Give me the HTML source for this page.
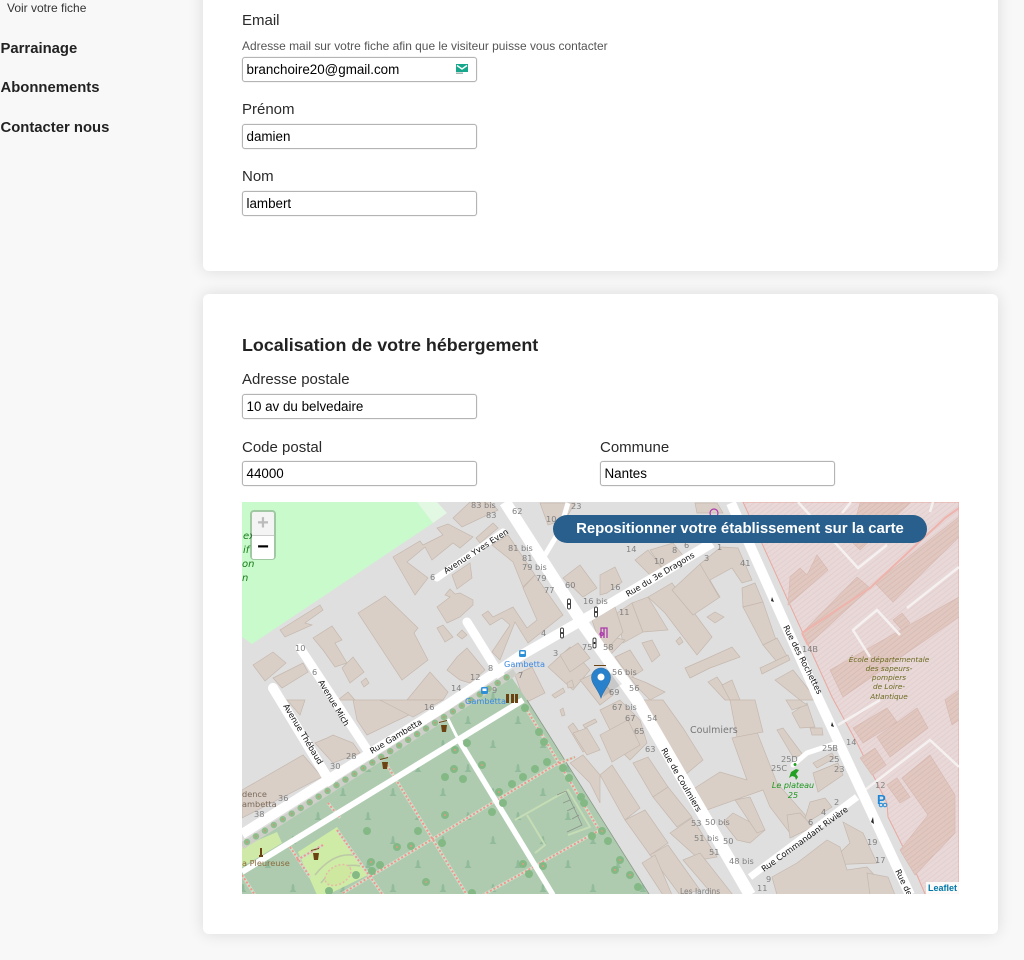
<!DOCTYPE html>
<html lang="fr"><head><meta charset="utf-8"><title>Localisation</title>
<style>
html,body{margin:0;padding:0;background:#f8f8f8}
body{width:1024px;height:960px;overflow:hidden;background:#f8f8f8;font-family:"Liberation Sans",Arial,sans-serif;color:#222;position:relative}
#w{position:absolute;left:0;top:0;width:1024px;height:960px;filter:blur(.35px);overflow:hidden}
.a{position:absolute;white-space:nowrap}
.nav{font-weight:bold;font-size:14.850px;left:.500px;color:#222;line-height:18px}
.card{position:absolute;left:203px;width:795px;background:#fff;border-radius:6px;box-shadow:0 0 16px rgba(0,0,0,.12)}
.lb{font-size:15px;left:242px;line-height:18px;color:#2a2a2a}
.in{position:absolute;box-sizing:border-box;width:235px;height:25px;border:1px solid #b4b4b4;border-radius:3px;background:#fff;font-size:13.400px;line-height:23px;padding-left:3.500px;color:#000;box-shadow:0 0 1px rgba(0,0,0,.25)}
svg text{font-family:"DejaVu Sans",sans-serif;font-size:8.200px;fill:#808080}
svg text.r{fill:#111;font-size:8.200px}
svg text.b{fill:#3b88e0;font-size:8.200px}
.z{position:absolute;left:250px;top:510px;width:26px;height:50px;box-sizing:border-box;border:2px solid rgba(0,0,0,.2);border-radius:4px;background-clip:padding-box}
.z div{height:23px;background:#fff;text-align:center;font:bold 20px/22px "Liberation Sans",sans-serif;color:#000}
.z div:first-child{background:#f4f4f4;color:#bbb;border-bottom:1px solid #ccc;border-radius:2px 2px 0 0}
.z div:last-child{border-radius:0 0 2px 2px}
</style></head><body><div id="w">
<div class="a" style="left:7px;top:1px;font-size:12px;line-height:14px;color:#333">Voir votre fiche</div>
<div class="a nav" style="top:40px">Parrainage</div>
<div class="a nav" style="top:79px">Abonnements</div>
<div class="a nav" style="top:119px">Contacter nous</div>

<div class="card" style="top:-20px;height:291px"></div>
<div class="card" style="top:294px;height:640px"></div>

<div class="a lb" style="top:12px">Email</div>
<div class="a" style="left:242px;top:38.500px;font-size:11.950px;line-height:14px;color:#555">Adresse mail sur votre fiche afin que le visiteur puisse vous contacter</div>
<div class="in" style="left:242px;top:57px">branchoire20@gmail.com
<svg style="position:absolute;left:213px;top:6px" width="12" height="11" viewBox="0 0 12 11"><rect x="0" y="0" width="12" height="8" fill="#16a78c"/><path d="M1 1.500 6 5 11 1.500" fill="none" stroke="#fff" stroke-width="1.400"/><rect x="0" y="8.500" width="7" height="1.500" fill="#9fb5b0"/></svg></div>
<div class="a lb" style="top:101px">Prénom</div>
<div class="in" style="left:242px;top:124px">damien</div>
<div class="a lb" style="top:168px">Nom</div>
<div class="in" style="left:242px;top:191px">lambert</div>

<div class="a" style="left:242px;top:334.500px;font-size:17.900px;font-weight:bold;line-height:21px;color:#222">Localisation de votre hébergement</div>
<div class="a lb" style="top:371px">Adresse postale</div>
<div class="in" style="left:242px;top:394px">10 av du belvedaire</div>
<div class="a lb" style="top:439px">Code postal</div>
<div class="in" style="left:242px;top:461px">44000</div>
<div class="a lb" style="left:600px;top:439px">Commune</div>
<div class="in" style="left:600px;top:461px">Nantes</div>

<svg class="a" style="left:242px;top:502px" width="717" height="392" viewBox="242 502 717 392">
<defs>
<pattern id="tr" width="50" height="48" patternUnits="userSpaceOnUse" x="10" y="-8">
<path d="M8 4c1.500 0 1.500 4 1.500 5.500l2 2.500h-7l2-2.500C6.500 8 6.500 4 8 4zM33 28c1.500 0 1.500 4 1.500 5.500l2 2.500h-7l2-2.500c0-1.500 0-5.500 1.500-5.500z" fill="#92bb9b"/>
</pattern>
<pattern id="h" width="4" height="4" patternUnits="userSpaceOnUse" patternTransform="rotate(-38)">
<rect width="4" height="4" fill="#e9d8d8"/><rect width="4" height="1" fill="#e4cfcf"/>
</pattern>
<pattern id="hb" width="4" height="4" patternUnits="userSpaceOnUse" patternTransform="rotate(-38)">
<rect width="4" height="4" fill="#e0c8c0"/><rect width="4" height="1" fill="#dabdb5"/>
</pattern>
</defs>
<rect x="242" y="502" width="717" height="392" fill="#dfdfdf"/>
<polygon points="242,502 417,502 433,523 252,644 242,637" fill="#c8facc"/>
<polygon points="417,502 437,502 447,513 433,523" fill="#e2f8e2"/>
<text x="243" y="539" style="fill:#1c7a1c;font-style:italic;font-size:10px">ex</text>
<text x="243" y="553" style="fill:#1c7a1c;font-style:italic;font-size:10px">if</text>
<text x="242" y="567" style="fill:#1c7a1c;font-style:italic;font-size:10px">on</text>
<text x="242" y="581" style="fill:#1c7a1c;font-style:italic;font-size:10px">n</text>

<!-- pink -->
<polygon points="743,502 832,697 857,743 887,803 888,817 917,875 925,894 959,894 959,502" fill="url(#h)" stroke="#e8a8a0" stroke-width="1"/>
<g fill="url(#hb)" stroke="#d6b8b0" stroke-width=".6">
<polygon points="790,577 800,568 807,575 817,555 828,570 788,605"/>
<polygon points="802,633 857,577 870,588 808,645"/>
<polygon points="875,583 959,517 959,537 893,602"/>
<polygon points="830,670 959,597 959,617 843,697"/>
<polygon points="860,503 910,503 860,550 850,540"/>
<polygon points="893,620 902,613 910,623 902,630"/>
<polygon points="853,728 887,708 897,722 863,743"/>
<polygon points="877,737 917,708 928,728 890,757"/>
<polygon points="860,758 875,748 886,765 872,775"/>
<polygon points="887,785 897,778 910,797 900,803"/>
<polygon points="902,778 930,755 955,795 955,833 915,875 900,850 928,815"/>
<polygon points="945,700 959,690 959,720 952,725"/>
</g>
<path d="M802 633 870 588 945 518 959 508M808 645 802 633" fill="none" stroke="#eeb3ab" stroke-width="2"/>
<g fill="none" stroke="#f6f1f1" stroke-width="2.500">
<path d="M798 502 858 568 887 545M842 513 851 502M930 512 933 502M907 608 959 567M900 635 877 610 853 630 870 657M865 790 930 740 959 767M838 725 880 700"/>
</g>

<!-- buildings -->
<g fill="#d9cfc7" stroke="#c5b8ad" stroke-width=".7">
<polygon points="280,630 320,605 323,610 305,623 312,625 285,637"/>
<polygon points="313,638 332,626 342,640 335,643 347,663 335,667 323,650"/>
<polygon points="342,668 353,657 364,672 350,683"/>
<polygon points="253,665 273,652 286,663 265,681"/>
<polygon points="273,678 303,663 308,672 282,688"/>
<polygon points="361,682 366,678 369,683 364,687"/>
<polygon points="358,613 385,596 418,628 414,633 428,660 402,680"/>
<polygon points="393,557 420,541 423,545 443,535 437,528 448,524 473,537 460,548 453,543 432,560 425,547 407,562 428,578 415,595"/>
<polygon points="453,518 470,502 490,502 498,510 462,527"/>
<polygon points="476,538 493,523 498,528 480,543"/>
<polygon points="492,545 508,535 535,575 523,587 513,562"/>
<polygon points="452,575 470,563 472,578 457,589"/>
<polygon points="437,607 450,597 445,595 450,589 455,594 460,593 473,600 473,605 460,617 447,623"/>
<polygon points="437,628 443,625 453,637 445,642"/>
<polygon points="457,635 462,630 467,635 462,639"/>
<polygon points="482,615 488,611 493,617 513,607 527,628 537,620 523,588 535,575 563,615 528,643 515,622 500,660 492,652 510,625 502,618 490,625"/>
<polygon points="447,670 457,657 467,648 485,670 470,683 460,680"/>
<polygon points="407,700 430,672 448,692 443,700"/>
<polygon points="338,700 348,692 355,700"/>
<polygon points="515,675 532,667 545,693 525,703"/>
<polygon points="548,667 570,647 590,670 573,690"/>
<polygon points="563,578 580,565 597,588 583,597"/>
<polygon points="567,683 572,680 574,687 568,688"/>
<polygon points="552,695 563,688 565,692 555,698"/>
<polygon points="600,575 615,567 622,582 607,593 600,595"/>
<polygon points="635,560 648,550 665,572 653,578"/>
<polygon points="650,550 673,543 685,558 665,572"/>
<polygon points="695,503 717,503 723,513 697,513"/>
<polygon points="540,503 575,503 565,520 548,525"/>
<polygon points="617,613 632,603 643,632 623,643"/>
<polygon points="632,603 648,597 668,630 643,632"/>
<polygon points="648,597 672,583 712,637 697,655 665,613"/>
<polygon points="672,590 700,564 720,597 693,615"/>
<polygon points="721,547 738,548 752,580 742,583 732,568 710,580 719,597 700,564"/>
<polygon points="642,643 652,640 660,655 652,662"/>
<polygon points="600,643 613,637 625,640 610,655"/>
<polygon points="615,657 630,650 643,670 632,677 647,683 665,692 650,700 637,687"/>
<polygon points="707,617 715,612 724,617 715,623"/>
<polygon points="676,641 680,637 683,642 679,645"/>
<polygon points="742,588 755,583 763,602 743,607"/>
<polygon points="743,607 763,602 777,643 763,645"/>
<polygon points="763,645 777,638 788,658 777,662"/>
<polygon points="760,668 788,655 790,660 762,674"/>
<polygon points="685,668 708,658 732,647 740,657 710,668 690,678"/>
<polygon points="775,680 793,670 817,700 800,700"/>
<polygon points="708,682 717,677 733,700 725,700"/>
<polygon points="722,685 732,680 740,700 730,700"/>
<polygon points="643,700 663,700 683,728 703,760 685,775 663,743"/>
<polygon points="600,710 620,700 640,720 647,743 630,760 620,750"/>
<polygon points="600,735 628,720 640,745 612,762"/>
<polygon points="600,775 612,765 640,808 625,820"/>
<polygon points="625,820 645,810 668,843 650,855"/>
<polygon points="650,855 668,845 700,890 680,895"/>
<polygon points="633,763 648,757 668,787 653,797"/>
<polygon points="653,797 668,787 692,817 677,827"/>
<polygon points="670,833 692,818 717,857 700,860"/>
<polygon points="683,860 700,853 733,895 713,895"/>
<polygon points="642,863 655,855 672,895 663,895"/>
<polygon points="732,738 757,732 777,783 807,817 793,837 770,807 763,790 707,810 695,788 720,772 747,780"/>
<polygon points="730,700 755,700 763,732 737,737"/>
<polygon points="777,730 783,728 803,755 793,757"/>
<polygon points="813,763 832,753 835,758 817,768"/>
<polygon points="813,773 838,763 843,775 818,792"/>
<polygon points="810,802 825,798 832,807 803,825"/>
<polygon points="787,815 800,813 813,827 790,838"/>
<polygon points="723,822 733,813 765,830 750,843 737,840"/>
<polygon points="735,800 750,797 765,830 757,833"/>
<polygon points="843,822 863,833 877,863 827,865 850,843"/>
<polygon points="772,877 797,863 827,840 840,847 847,870 867,867 893,895 777,895"/>
<polygon points="867,873 888,877 895,895 870,895"/>
<polygon points="792,713 807,703 815,727 800,728"/>
<polygon points="810,728 822,728 823,735 812,735"/>
<polygon points="786,700 800,700 807,705 792,710"/>
<polygon points="568,727 573,723 590,747 583,752"/>
<polygon points="560,710 563,708 565,715 562,716"/>
<polygon points="583,725 595,719 597,722 585,728"/>
<polygon points="570,763 583,755 600,775 600,803 590,783"/>
<polygon points="573,733 587,728 600,750 587,755"/>
<polygon points="580,680 597,672 613,695 600,705"/>
<polygon points="560,655 578,643 590,658 570,672"/>
<polygon points="592,620 615,607 623,632 603,653"/>
<polygon points="242,790 303,755 322,777 242,818"/>
<polygon points="315,743 327,738 333,735 353,743 360,753 333,763"/>
<polygon points="353,700 380,700 413,713 367,735 357,720"/>
<polygon points="380,700 443,700 413,717"/>
<polygon points="287,700 305,700 300,715"/>
</g>

<!-- park -->
<polygon points="242,848 512,678 527,700 649,894 242,894" fill="#aecbb0"/>
<polygon points="242,848 512,678 527,700 649,894 242,894" fill="url(#tr)"/>
<path d="M527 700 649 894" stroke="#8a9a88" stroke-width=".8" fill="none"/>
<polygon points="242,847 277,832 282,843 242,867" fill="#cfeaa8"/>
<polygon points="298,852 337,827 368,875 327,895 317,895" fill="#cfeca6"/>
<g fill="none" stroke="#bcc9a6" stroke-width="1.600">
<path d="M315 875Q335 850 358 856M321 883Q337 862 360 866"/>
</g>
<ellipse cx="338" cy="875" rx="14" ry="9" fill="#cfe8a0" stroke="#e5b8a8" stroke-width="1.500" stroke-dasharray="2 2" transform="rotate(-30 338 875)"/>
<path d="M515 820 568 790 590 827 568 835M527 815 545 845 535 853" fill="none" stroke="#c5dcb5" stroke-width="2"/>
<path d="M557 795 566 791 582 825 567 832M563 803 570 800M567 811 575 807M572 819 579 815" fill="none" stroke="#8c9488" stroke-width=".8"/>

<!-- pink paths -->
<g fill="none" stroke="#cfdfca" stroke-width="3"><path d="M387 765 467 895M290 847 310 877M328 803 340 818M343 893 555 765 575 757M483 895 600 830M527 710 598 828M297 860 323 845M242 875 255 895M337 830 383 895"/></g>
<g fill="none" stroke="#f0968c" stroke-width="2" stroke-dasharray="2 2"><path d="M387 765 467 895M290 847 310 877M328 803 340 818M343 893 555 765 575 757M483 895 600 830M527 710 598 828M297 860 323 845M242 875 255 895M337 830 383 895"/></g>

<!-- white roads -->
<g fill="none" stroke="#fff" stroke-linecap="butt">
<path d="M505 502 585 627 637 700 750 895" stroke-width="12"/>
<path d="M731 503 819 700 910 895" stroke-width="10"/>
<path d="M242 834 447 705 520 656 600 610 712 543" stroke-width="10"/>
<path d="M242 872 523 700" stroke-width="6"/>
<path d="M447 717 457 737" stroke-width="3"/>
<path d="M457 737 553 895" stroke-width="5.500"/>
<path d="M437 578 503 532" stroke-width="7" stroke-linecap="round"/>
<path d="M467 622 500 675" stroke-width="9" stroke-linecap="round"/>
<path d="M300 648 372 757" stroke-width="9" stroke-linecap="round"/>
<path d="M273 688 330 782" stroke-width="10" stroke-linecap="round"/>
<path d="M750 877 857 797" stroke-width="7"/>
<path d="M793 765 807 753 837 743" stroke-width="5" stroke-linecap="round"/>
<path d="M568 503 560 530 545 555" stroke-width="5"/>
</g>
<!-- tree row -->
<path d="M242 846 515 672" stroke="#cfcfc9" stroke-width="7" fill="none"/>
<path d="M247 842 512 674" stroke="#90bf8e" stroke-width="6.500" stroke-linecap="round" stroke-dasharray="0 10.600" fill="none"/>
<path d="M247 842 512 674" stroke="#c09b7c" stroke-width="2" stroke-linecap="round" stroke-dasharray="0 10.600" fill="none"/>
<!-- trees -->
<g fill="#84b986">
<circle cx="455" cy="750" r="4"/><circle cx="467" cy="743" r="4"/><circle cx="482" cy="765" r="4"/><circle cx="445" cy="777" r="4"/><circle cx="454" cy="769" r="4"/><circle cx="463" cy="779" r="4"/><circle cx="499" cy="792" r="4"/><circle cx="512" cy="784" r="4"/><circle cx="523" cy="777" r="4"/><circle cx="535" cy="769" r="4"/><circle cx="547" cy="762" r="4"/><circle cx="525" cy="708" r="4"/><circle cx="539" cy="732" r="4"/><circle cx="544" cy="742" r="4"/><circle cx="563" cy="768" r="4"/><circle cx="569" cy="778" r="4"/><circle cx="581" cy="797" r="4"/><circle cx="584" cy="803" r="4"/><circle cx="592" cy="836" r="4"/><circle cx="503" cy="803" r="4"/><circle cx="492" cy="812" r="4"/><circle cx="445" cy="815" r="4"/><circle cx="418" cy="831" r="4"/><circle cx="367" cy="831" r="4"/><circle cx="397" cy="847" r="4"/><circle cx="411" cy="846" r="4"/><circle cx="442" cy="843" r="4"/><circle cx="371" cy="862" r="4"/><circle cx="380" cy="865" r="4"/><circle cx="372" cy="871" r="4"/><circle cx="356" cy="875" r="4"/><circle cx="426" cy="882" r="4"/><circle cx="523" cy="864" r="4"/><circle cx="543" cy="866" r="4"/><circle cx="529" cy="874" r="4"/><circle cx="472" cy="893" r="4"/><circle cx="329" cy="891" r="4"/><circle cx="602" cy="831" r="4"/><circle cx="608" cy="841" r="4"/><circle cx="620" cy="860" r="4"/><circle cx="615" cy="870" r="4"/><circle cx="630" cy="875" r="4"/><circle cx="638" cy="887" r="4"/>
</g>
<g fill="#e09a80"><circle cx="455" cy="750" r="1"/><circle cx="482" cy="765" r="1"/><circle cx="454" cy="769" r="1"/><circle cx="499" cy="792" r="1"/><circle cx="445" cy="815" r="1"/><circle cx="397" cy="847" r="1"/><circle cx="411" cy="846" r="1"/><circle cx="371" cy="862" r="1"/><circle cx="426" cy="882" r="1"/><circle cx="523" cy="864" r="1"/><circle cx="543" cy="866" r="1"/><circle cx="602" cy="831" r="1"/><circle cx="620" cy="860" r="1"/><circle cx="615" cy="870" r="1"/><circle cx="630" cy="875" r="1"/></g>

<!-- small POI icons -->
<g fill="#6b4313">
<path d="M441 725h6l-1 7h-4zM382 762h6l-1 7h-4zM313 853h6l-1 7h-4zM439 722l8-2v1l-8 2zM380 759l8-2v1l-8 2zM311 850l8-2v1l-8 2z"/>
<path d="M259 855h4v2h-4zM260 848h2v7h-2z"/>
<path d="M506 694h3v9h-3zM511 694h3v9h-3zM515 694h3v9h-3z"/>
<path d="M594 665h12v1h-12z"/>
</g>
<g fill="none" stroke="#444" stroke-width="1"><rect x="567.500" y="599" width="3" height="10" rx="1.500"/><rect x="594.500" y="607" width="3" height="10" rx="1.500"/><rect x="560.500" y="628" width="3" height="10" rx="1.500"/><rect x="593" y="638" width="3" height="10" rx="1.500"/></g>
<g fill="#111"><circle cx="569" cy="604" r="1"/><circle cx="596" cy="612" r="1"/><circle cx="562" cy="633" r="1"/><circle cx="594.500" cy="643" r="1"/></g>
<rect x="519" y="650" width="7" height="7" rx="1.500" fill="#2d8fd8"/><rect x="520.500" y="651.500" width="4" height="2.500" fill="#fff"/>
<rect x="481" y="687" width="7" height="7" rx="1.500" fill="#2d8fd8"/><rect x="482.500" y="688.500" width="4" height="2.500" fill="#fff"/>
<text x="504" y="667" class="b">Gambetta</text>
<text x="465" y="704" class="b">Gambetta</text>
<g fill="none" stroke="#ac39ac" stroke-width="1.300"><path d="M601 638v-10h6v10M604 628v10"/><circle cx="601.500" cy="634" r="1.500"/></g>
<circle cx="714" cy="513" r="4" fill="none" stroke="#ac39ac" stroke-width="1.200"/>
<g fill="#2a2a2a"><path d="M772 597l2 5-3-1zM832 722l2 5-3-1zM873 817l1 7-3-2z"/></g>
<path d="M791 772l5-3 3 1-3 4 2 3-2 3-1-3-3-1-3 2zM795 766a1.500 1.500 0 1 1 .1 0z" fill="#22a022"/>
<text x="877" y="804" style="font:bold 13px 'Liberation Sans';fill:#1e88d8">P</text>
<circle cx="881" cy="805" r="1.800" fill="none" stroke="#1e88d8"/><circle cx="885" cy="805" r="1.800" fill="none" stroke="#1e88d8"/>

<!-- road labels -->
<g>
<text class="r" transform="translate(446,574) rotate(-33)">Avenue Yves Even</text>
<text class="r" transform="translate(628,597) rotate(-31)">Rue du 3e Dragons</text>
<text class="r" transform="translate(783,627) rotate(63)">Rue des Rochettes</text>
<text class="r" transform="translate(661,750) rotate(60)">Rue de Coulmiers</text>
<text class="r" transform="translate(764,872) rotate(-36)">Rue Commandant Rivière</text>
<text class="r" transform="translate(318,682) rotate(59)">Avenue Mich</text>
<text class="r" transform="translate(283,706) rotate(59)">Avenue Thébaud</text>
<text class="r" transform="translate(372,754) rotate(-31)">Rue Gambetta</text>
<text class="r" transform="translate(895,871) rotate(64)">Rue des</text>
</g>
<g>
<text x="471" y="508">83 bis</text><text x="486" y="518">83</text><text x="512" y="514">62</text><text x="571" y="509">23</text><text x="546" y="522">10</text>
<text x="508" y="551">81 bis</text><text x="522" y="561">81</text><text x="522" y="570">79 bis</text><text x="536" y="581">79</text><text x="544" y="593">77</text><text x="565" y="588">60</text><text x="583" y="604">16 bis</text><text x="430" y="580">6</text>
<text x="619" y="615">11</text><text x="541" y="636">4</text><text x="553" y="656">3</text><text x="582" y="650">75</text><text x="603" y="650">58</text><text x="612" y="675">56 bis</text><text x="629" y="691">56</text><text x="609" y="695">69</text><text x="612" y="710">67 bis</text><text x="625" y="721">67</text><text x="647" y="721">54</text><text x="634" y="734">65</text><text x="645" y="752">63</text>
<text x="488" y="671">8</text><text x="470" y="680">12</text><text x="451" y="691">14</text><text x="424" y="710">16</text><text x="518" y="678">7</text><text x="492" y="693">9</text><text x="295" y="651">10</text><text x="312" y="675">6</text>
<text x="346" y="759">28</text><text x="330" y="769">30</text><text x="278" y="801">36</text><text x="254" y="817">38</text>
<text x="626" y="552">14</text><text x="610" y="590">16</text><text x="654" y="564">10</text><text x="672" y="553">8</text><text x="704" y="561">3</text><text x="717" y="550">1</text><text x="740" y="566">41</text><text x="684" y="548">6</text>
<text x="802" y="652">14B</text><text x="846" y="745">14</text><text x="875" y="788">12</text><text x="822" y="751">25B</text><text x="829" y="762">25</text><text x="834" y="772">23</text><text x="781" y="762">25D</text><text x="771" y="771">25C</text>
<text x="834" y="805">2</text><text x="821" y="815">4</text><text x="808" y="825">6</text><text x="691" y="826">53</text><text x="705" y="825">50 bis</text><text x="694" y="841">51 bis</text><text x="723" y="844">50</text><text x="709" y="855">51</text><text x="729" y="864">48 bis</text>
<text x="867" y="845">19</text><text x="875" y="863">17</text><text x="766" y="882">9</text><text x="757" y="891">11</text>
<text x="690" y="733" style="font-size:9.500px;fill:#777">Coulmiers</text>
<text x="242" y="797" style="fill:#7a6a5a">dence</text><text x="242" y="807" style="fill:#7a6a5a">ambetta</text>
<text x="242" y="866" style="fill:#8b6a3a">a Pleureuse</text>
<text x="680" y="894" style="font-size:7.500px">Les Jardins</text>
<g text-anchor="middle">
<text x="889" y="662" style="fill:#6a6a20;font-size:7.300px;font-style:italic">École départementale</text>
<text x="889" y="671" style="fill:#6a6a20;font-size:7.300px;font-style:italic">des sapeurs-</text>
<text x="889" y="680" style="fill:#6a6a20;font-size:7.300px;font-style:italic">pompiers</text>
<text x="889" y="689" style="fill:#6a6a20;font-size:7.300px;font-style:italic">de Loire-</text>
<text x="889" y="699" style="fill:#6a6a20;font-size:7.300px;font-style:italic">Atlantique</text>
<text x="793" y="788" style="fill:#1e961e;font-size:8px;font-style:italic">Le plateau</text>
<text x="793" y="798" style="fill:#1e961e;font-size:8px;font-style:italic">25</text>
</g>
</g>

<!-- marker -->
<path d="M603 697 622 684 612 672 606 680Z" fill="#000" opacity=".1"/>
<path d="M601 698C598 689 591.500 684 591.500 677.500A9.500 9.500 0 0 1 610.500 677.500C610.500 684 604 689 601 698Z" fill="#2a81cb" stroke="#2a6fa8" stroke-width=".6"/>
<circle cx="601" cy="677" r="3.500" fill="#fff"/>
</svg>

<div class="z"><div>+</div><div>−</div></div>
<div class="a" style="left:553px;top:515px;width:374px;height:28px;background:#285f8d;border-radius:14px;color:#fff;font-weight:bold;font-size:14.900px;line-height:29px;text-align:center">Repositionner votre établissement sur la carte</div>
<div class="a" style="left:926px;top:882px;width:33px;height:12px;background:rgba(255,255,255,.85);color:#0078a8;font-size:9px;font-weight:bold;line-height:12px;text-align:center">Leaflet</div>
</div></body></html>
